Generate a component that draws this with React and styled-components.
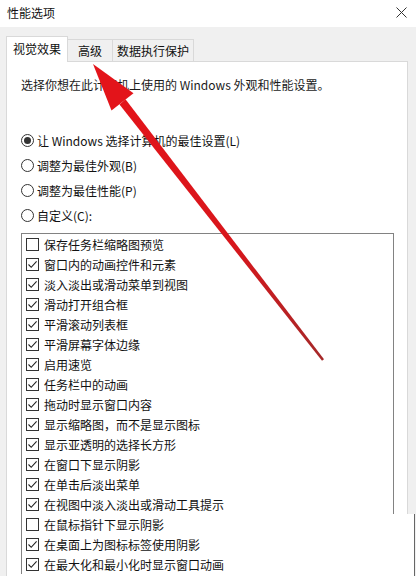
import styled, { createGlobalStyle } from 'styled-components'

const Global = createGlobalStyle`
  html, body { margin: 0; padding: 0; background: #fff; }
  body {
    font-family: "Noto Sans CJK SC", "Noto Sans", "Liberation Sans", sans-serif;
    font-size: 12px;
    color: #1a1a1a;
  }
`

const topItems = [
  ['保存任务栏缩略图预览', false],
  ['窗口内的动画控件和元素', true],
  ['淡入淡出或滑动菜单到视图', true],
  ['滑动打开组合框', true],
  ['平滑滚动列表框', true],
  ['平滑屏幕字体边缘', true],
  ['启用速览', true],
  ['任务栏中的动画', true],
  ['拖动时显示窗口内容', true],
  ['显示缩略图，而不是显示图标', true],
  ['显示亚透明的选择长方形', true],
  ['在窗口下显示阴影', true],
  ['在单击后淡出菜单', true],
  ['在视图中淡入淡出或滑动工具提示', true],
]

const bottomItems = [
  ['在鼠标指针下显示阴影', false],
  ['在桌面上为图标标签使用阴影', true],
  ['在最大化和最小化时显示窗口动画', true],
]

const radios = [
  ['让 Windows 选择计算机的最佳设置(L)', true],
  ['调整为最佳外观(B)', false],
  ['调整为最佳性能(P)', false],
  ['自定义(C):', false],
]

const Check = ({ checked }) => (
  <Box>
    {checked && (
      <svg width="11" height="11" viewBox="0 0 11 11">
        <polyline points="1.5,5.5 4.2,8.3 9.6,2.4" fill="none" stroke="#222" strokeWidth="1.1" />
      </svg>
    )}
  </Box>
)

const Row = ({ label, checked }) => (
  <Item>
    <Check checked={checked} />
    <span>{label}</span>
  </Item>
)

const Arrow = () => (
  <ArrowLayer width="416" height="576" viewBox="0 0 416 576">
    <defs>
      <linearGradient id="ag" x1="120" y1="100" x2="323" y2="360" gradientUnits="userSpaceOnUse">
        <stop offset="0" stopColor="#e3141a" />
        <stop offset="0.55" stopColor="#d8161c" />
        <stop offset="1" stopColor="#a52828" />
      </linearGradient>
    </defs>
    <polygon points="93,64 111.5,110.5 133.5,93.3" fill="#e3141a" />
    <polygon points="119.5,104.5 125.5,99.3 324,359.2 322,360.8" fill="url(#ag)" />
  </ArrowLayer>
)

export default function App() {
  return (
    <>
      <Global />
      <Screen>
        <TitleBar>
          <span>性能选项</span>
          <svg width="11" height="11" viewBox="0 0 11 11">
            <path d="M0.5 0.5 L10.5 10.5 M10.5 0.5 L0.5 10.5" stroke="#333" strokeWidth="1" />
          </svg>
        </TitleBar>
        <Body>
          <TabBar>
            <Tab $active $w={62}>视觉效果</Tab>
            <Tab $w={46}>高级</Tab>
            <Tab $w={82}>数据执行保护</Tab>
          </TabBar>
          <Panel>
            <Desc>选择你想在此计算机上使用的 Windows 外观和性能设置。</Desc>
            <Radios>
              {radios.map(([label, on]) => (
                <RadioRow key={label}>
                  <Radio $on={on} />
                  <span>{label}</span>
                </RadioRow>
              ))}
            </Radios>
            <List>
              {topItems.map(([l, c]) => <Row key={l} label={l} checked={c} />)}
            </List>
          </Panel>
        </Body>
        <Lower>
          <ListRest>
            {bottomItems.map(([l, c]) => <Row key={l} label={l} checked={c} />)}
          </ListRest>
        </Lower>
        <Arrow />
      </Screen>
    </>
  )
}

const Screen = styled.div`
  position: relative;
  width: 416px;
  height: 576px;
  overflow: hidden;
  background: #f0f0f0;
`
const TitleBar = styled.div`
  height: 27px;
  background: #fff;
  display: flex;
  align-items: center;
  justify-content: space-between;
  padding: 0 9px 2px 7px;
  box-sizing: border-box;
  font-size: 12px;
  color: #111;
`
const Body = styled.div`
  padding: 9px 8px 0 6px;
  background: #f0f0f0;
`
const TabBar = styled.div`
  display: flex;
  align-items: flex-end;
  height: 25px;
`
const Tab = styled.div`
  position: relative;
  z-index: ${({ $active }) => ($active ? 1 : 0)};
  width: ${({ $w }) => $w}px;
  height: ${({ $active }) => ($active ? 26 : 22)}px;
  margin-bottom: ${({ $active }) => ($active ? -1 : 0)}px;
  margin-left: ${({ $active }) => ($active ? 0 : -1)}px;
  box-sizing: border-box;
  border: 1px solid #d9d9d9;
  border-bottom: none;
  background: ${({ $active }) => ($active ? '#fff' : '#f0f0f0')};
  display: flex;
  align-items: center;
  justify-content: center;
  padding-bottom: ${({ $active }) => ($active ? 2 : 0)}px;
  color: #111;
  &:first-child { margin-left: 0; }
`
const Panel = styled.div`
  background: #fff;
  border: 1px solid #d9d9d9;
  border-bottom: none;
  padding: 0 13px 0 14px;
`
const Desc = styled.div`
  margin-top: 15px;
  line-height: 16px;
  color: #1a1a1a;
`
const Radios = styled.div`
  margin-top: 35px;
  display: flex;
  flex-direction: column;
`
const RadioRow = styled.div`
  height: 25px;
  display: flex;
  align-items: center;
  gap: 3px;
  color: #111;
`
const Radio = styled.div`
  width: 13px;
  height: 13px;
  box-sizing: border-box;
  border: 1px solid #333;
  border-radius: 50%;
  display: flex;
  align-items: center;
  justify-content: center;
  &::after {
    content: '';
    width: 7px;
    height: 7px;
    border-radius: 50%;
    background: ${({ $on }) => ($on ? '#333' : 'transparent')};
  }
`
const List = styled.div`
  margin-top: 5px;
  border: 1px solid #828282;
  border-bottom: none;
  display: flex;
  flex-direction: column;
`
const Item = styled.div`
  height: 20px;
  display: flex;
  align-items: center;
  gap: 5px;
  padding-left: 4px;
  color: #111;
  white-space: nowrap;
`
const Box = styled.div`
  width: 13px;
  height: 13px;
  box-sizing: border-box;
  border: 1px solid #333;
  display: flex;
  align-items: center;
  justify-content: center;
  flex-shrink: 0;
`
const Lower = styled.div`
  width: 415px;
  height: 62px;
  box-sizing: border-box;
  border-right: 1px solid #666;
  background: linear-gradient(to right, #f0f0f0 6px, #d9d9d9 6px 7px, #fff 7px);
  padding-left: 21px;
`
const ListRest = styled.div`
  border-left: 1px solid #828282;
  display: flex;
  flex-direction: column;
`
const ArrowLayer = styled.svg`
  position: absolute;
  left: 0;
  top: 0;
  pointer-events: none;
`
